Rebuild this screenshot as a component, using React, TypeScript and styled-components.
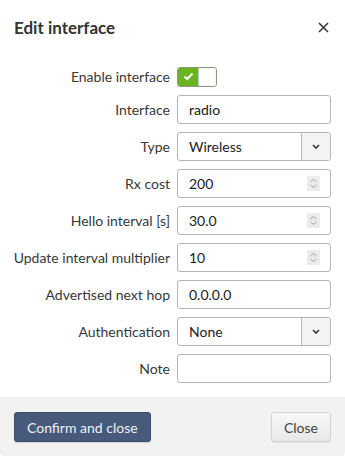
import styled, { createGlobalStyle } from "styled-components";

const GlobalStyle = createGlobalStyle`
  html, body {
    margin: 0;
    padding: 0;
    background: #ffffff;
  }
  body {
    font-family: Lato, "Open Sans", sans-serif;
    color: #333333;
  }
`;

const Modal = styled.div`
  width: 345px;
  height: 456px;
  display: flex;
  flex-direction: column;
  background: #ffffff;
  border-radius: 4px;
  overflow: hidden;
`;

const Header = styled.div`
  height: 54px;
  padding: 0 14px;
  display: flex;
  align-items: center;
  justify-content: space-between;
  box-sizing: border-box;
`;

const Title = styled.h1`
  margin: 0;
  font-size: 17px;
  font-weight: 700;
  color: #333333;
`;

const CloseX = styled.button`
  border: 0;
  background: none;
  padding: 0;
  width: 14px;
  height: 14px;
  display: flex;
  align-items: center;
  justify-content: center;
  margin-right: 1px;
  cursor: pointer;
`;

const Body = styled.div`
  flex: 1;
  padding: 12px 14px 14px;
  display: grid;
  grid-template-columns: 156px 154px;
  column-gap: 7px;
  row-gap: 8px;
  align-content: start;
`;

const Label = styled.label`
  font-size: 14px;
  color: #383838;
  text-align: right;
  display: flex;
  align-items: center;
  justify-content: flex-end;
  white-space: nowrap;
`;

const Cell = styled.div<{ $short?: boolean }>`
  height: ${(p) => (p.$short ? "21px" : "29px")};
  display: flex;
  align-items: center;
`;

const Field = styled.div`
  width: 100%;
  height: 29px;
  box-sizing: border-box;
  border: 1px solid #b5b5b5;
  border-radius: 3px;
  display: flex;
  align-items: center;
  font-size: 14px;
  color: #222222;
  background: #ffffff;
  overflow: hidden;
`;

const FieldText = styled.span`
  flex: 1;
  padding-left: 11px;
`;

const SelectArrow = styled.div`
  width: 28px;
  height: 100%;
  border-left: 1px solid #b5b5b5;
  background: #f3f3f3;
  display: flex;
  align-items: center;
  justify-content: center;
`;

const Spinner = styled.div`
  width: 13px;
  height: 15px;
  margin-right: 10px;
  background: #ececec;
  display: flex;
  align-items: center;
  justify-content: center;
`;

const Switch = styled.div`
  width: 40px;
  height: 20px;
  box-sizing: border-box;
  border: 1px solid #8a9a7a;
  border-radius: 3px;
  display: flex;
  overflow: hidden;
  background: #ffffff;
`;

const SwitchOn = styled.div`
  width: 20px;
  background: #6ab41f;
  display: flex;
  align-items: center;
  justify-content: center;
`;

const SwitchKnob = styled.div`
  flex: 1;
  background: #ffffff;
  border-left: 1px solid #c8c8c8;
  box-shadow: inset 0 0 2px #dddddd;
`;

const Footer = styled.div`
  height: 59px;
  background: #f2f2f2;
  padding: 15px 14px 14px;
  box-sizing: border-box;
  display: flex;
  justify-content: space-between;
  align-items: flex-start;
`;

const Button = styled.button<{ $primary?: boolean }>`
  height: 30px;
  padding: 0 12px;
  font-family: Lato, "Open Sans", sans-serif;
  font-size: 14px;
  border-radius: 3px;
  cursor: pointer;
  color: ${(p) => (p.$primary ? "#eef1f6" : "#444444")};
  background: ${(p) =>
    p.$primary ? "#475a7b" : "linear-gradient(#f7f7f7, #e8e8e8)"};
  border: 1px solid ${(p) => (p.$primary ? "#3d4e6b" : "#d2d2d2")};
  box-shadow: ${(p) =>
    p.$primary ? "0 1px 1px rgba(0,0,0,0.15)" : "0 1px 1px rgba(0,0,0,0.06)"};
`;

const Chevron = () => (
  <svg width="8" height="5" viewBox="0 0 8 5">
    <path d="M1 1 L4 4 L7 1" fill="none" stroke="#333" strokeWidth={1.6} />
  </svg>
);

const Spin = () => (
  <Spinner>
    <svg width="9" height="11" viewBox="0 0 9 11">
      <path d="M1.5 4 L4.5 1.5 L7.5 4" fill="none" stroke="#a0a0a0" strokeWidth="1" />
      <path d="M1.5 7 L4.5 9.5 L7.5 7" fill="none" stroke="#a0a0a0" strokeWidth="1" />
    </svg>
  </Spinner>
);

const TextField = ({ value }: { value: string }) => (
  <Cell>
    <Field>
      <FieldText>{value}</FieldText>
    </Field>
  </Cell>
);

const SelectField = ({ value }: { value: string }) => (
  <Cell>
    <Field>
      <FieldText>{value}</FieldText>
      <SelectArrow>
        <Chevron />
      </SelectArrow>
    </Field>
  </Cell>
);

const NumberField = ({ value }: { value: string }) => (
  <Cell>
    <Field>
      <FieldText>{value}</FieldText>
      <Spin />
    </Field>
  </Cell>
);

export default function App() {
  return (
    <>
      <GlobalStyle />
      <Modal>
        <Header>
          <Title>Edit interface</Title>
          <CloseX aria-label="Close">
            <svg width="11" height="11" viewBox="0 0 11 11">
              <path d="M1 1 L10 10 M10 1 L1 10" stroke="#333" strokeWidth="1.5" />
            </svg>
          </CloseX>
        </Header>
        <Body>
          <Label>Enable interface</Label>
          <Cell $short>
            <Switch>
              <SwitchOn>
                <svg width="11" height="9" viewBox="0 0 11 9">
                  <path d="M1.5 4.5 L4.2 7 L9.5 1.5" fill="none" stroke="#fff" strokeWidth="2" />
                </svg>
              </SwitchOn>
              <SwitchKnob />
            </Switch>
          </Cell>

          <Label>Interface</Label>
          <TextField value="radio" />

          <Label>Type</Label>
          <SelectField value="Wireless" />

          <Label>Rx cost</Label>
          <NumberField value="200" />

          <Label>Hello interval [s]</Label>
          <NumberField value="30.0" />

          <Label>Update interval multiplier</Label>
          <NumberField value="10" />

          <Label>Advertised next hop</Label>
          <TextField value="0.0.0.0" />

          <Label>Authentication</Label>
          <SelectField value="None" />

          <Label>Note</Label>
          <TextField value="" />
        </Body>
        <Footer>
          <Button $primary>Confirm and close</Button>
          <Button>Close</Button>
        </Footer>
      </Modal>
    </>
  );
}
